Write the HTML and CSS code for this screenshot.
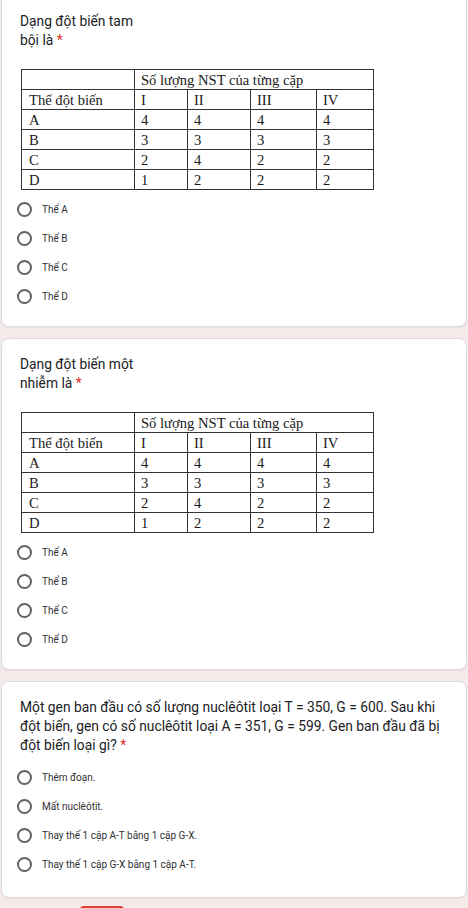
FILE: index.html
```html
<!DOCTYPE html>
<html lang="vi">
<head>
<meta charset="utf-8">
<link rel="stylesheet" href="styles.css">
</head>
<body>
<div class="page">
  <section class="card card-first">
    <div class="title">Dạng đột biến tam<br>bội là <span class="req">*</span></div>
    <table class="nst">
      <colgroup><col class="c1"><col class="c2"><col class="c3"><col class="c4"><col class="c5"></colgroup>
      <tr><td></td><td colspan="4">Số lượng NST của từng cặp</td></tr>
      <tr><td>Thể đột biến</td><td>I</td><td>II</td><td>III</td><td>IV</td></tr>
      <tr><td>A</td><td>4</td><td>4</td><td>4</td><td>4</td></tr>
      <tr><td>B</td><td>3</td><td>3</td><td>3</td><td>3</td></tr>
      <tr><td>C</td><td>2</td><td>4</td><td>2</td><td>2</td></tr>
      <tr><td>D</td><td>1</td><td>2</td><td>2</td><td>2</td></tr>
    </table>
    <div class="options">
      <div class="opt"><span class="radio"></span><span class="lbl">Thể A</span></div>
      <div class="opt"><span class="radio"></span><span class="lbl">Thể B</span></div>
      <div class="opt"><span class="radio"></span><span class="lbl">Thể C</span></div>
      <div class="opt"><span class="radio"></span><span class="lbl">Thể D</span></div>
    </div>
  </section>

  <section class="card">
    <div class="title">Dạng đột biến một<br>nhiễm là <span class="req">*</span></div>
    <table class="nst">
      <colgroup><col class="c1"><col class="c2"><col class="c3"><col class="c4"><col class="c5"></colgroup>
      <tr><td></td><td colspan="4">Số lượng NST của từng cặp</td></tr>
      <tr><td>Thể đột biến</td><td>I</td><td>II</td><td>III</td><td>IV</td></tr>
      <tr><td>A</td><td>4</td><td>4</td><td>4</td><td>4</td></tr>
      <tr><td>B</td><td>3</td><td>3</td><td>3</td><td>3</td></tr>
      <tr><td>C</td><td>2</td><td>4</td><td>2</td><td>2</td></tr>
      <tr><td>D</td><td>1</td><td>2</td><td>2</td><td>2</td></tr>
    </table>
    <div class="options">
      <div class="opt"><span class="radio"></span><span class="lbl">Thể A</span></div>
      <div class="opt"><span class="radio"></span><span class="lbl">Thể B</span></div>
      <div class="opt"><span class="radio"></span><span class="lbl">Thể C</span></div>
      <div class="opt"><span class="radio"></span><span class="lbl">Thể D</span></div>
    </div>
  </section>

  <section class="card card-last">
    <div class="title">Một gen ban đầu có số lượng nuclêôtit loại T = 350, G = 600. Sau khi đột biến, gen có số nuclêôtit loại A = 351, G = 599. Gen ban đầu đã bị đột biến loại gì? <span class="req">*</span></div>
    <div class="options options-text">
      <div class="opt"><span class="radio"></span><span class="lbl">Thêm đoạn.</span></div>
      <div class="opt"><span class="radio"></span><span class="lbl">Mất nuclêôtit.</span></div>
      <div class="opt"><span class="radio"></span><span class="lbl">Thay thế 1 cặp A-T bằng 1 cặp G-X.</span></div>
      <div class="opt"><span class="radio"></span><span class="lbl">Thay thế 1 cặp G-X bằng 1 cặp A-T.</span></div>
    </div>
  </section>

  <div class="bottom-bar"></div>
</div>
</body>
</html>
```

FILE: styles.css
```css
html, body {
  margin: 0;
  padding: 0;
}
body {
  background: #f5eaea;
  font-family: Roboto, "Noto Sans", sans-serif;
  color: #202124;
}
.page {
  display: flex;
  flex-direction: column;
  gap: 11px;
  padding: 0 1px;
}
.card {
  background: #fff;
  border: 1px solid #e0dcdc;
  border-radius: 8px;
  padding: 16px 18px 15px 18px;
  box-shadow: 0 1px 1px rgba(0,0,0,0.06);
}
.card-first {
  border-top: none;
  border-top-left-radius: 0;
  border-top-right-radius: 0;
  padding-top: 12px;
}
.card-last {
  padding-bottom: 18px;
}
.title {
  font-family: Roboto, "Open Sans", sans-serif;
  font-size: 13.8px;
  line-height: 19px;
  color: #202124;
}
.req {
  color: #d93025;
}
.nst {
  margin-top: 19px;
  margin-left: 1px;
  border-collapse: collapse;
  table-layout: fixed;
  width: 352px;
  font-family: "Liberation Serif", "Times New Roman", serif;
  font-size: 14.6px;
  color: #1a1a1a;
}
.nst col.c1 { width: 113px; }
.nst col.c2 { width: 53px; }
.nst col.c3 { width: 63px; }
.nst col.c4 { width: 66px; }
.nst col.c5 { width: 57px; }
.nst td {
  border: 1px solid #333;
  height: 19px;
  padding: 0 6px;
  line-height: 18px;
  vertical-align: middle;
  white-space: nowrap;
}
.nst tr td:first-child {
  padding-left: 7px;
}
.options {
  margin-top: 5px;
  display: flex;
  flex-direction: column;
}
.options-text {
  margin-top: 8px;
}
.opt {
  height: 29px;
  display: flex;
  align-items: center;
  gap: 10px;
}
.radio {
  width: 15px;
  height: 15px;
  box-sizing: border-box;
  border: 2px solid #5f6368;
  border-radius: 50%;
  margin-left: -3px;
  flex: none;
}
.lbl {
  font-family: Roboto, sans-serif;
  font-size: 10px;
  color: #303134;
}
.bottom-bar {
  margin-left: 79px;
  width: 44px;
  height: 10px;
  background: #db4437;
  border-radius: 4px 4px 0 0;
  margin-top: -3px;
}
```
